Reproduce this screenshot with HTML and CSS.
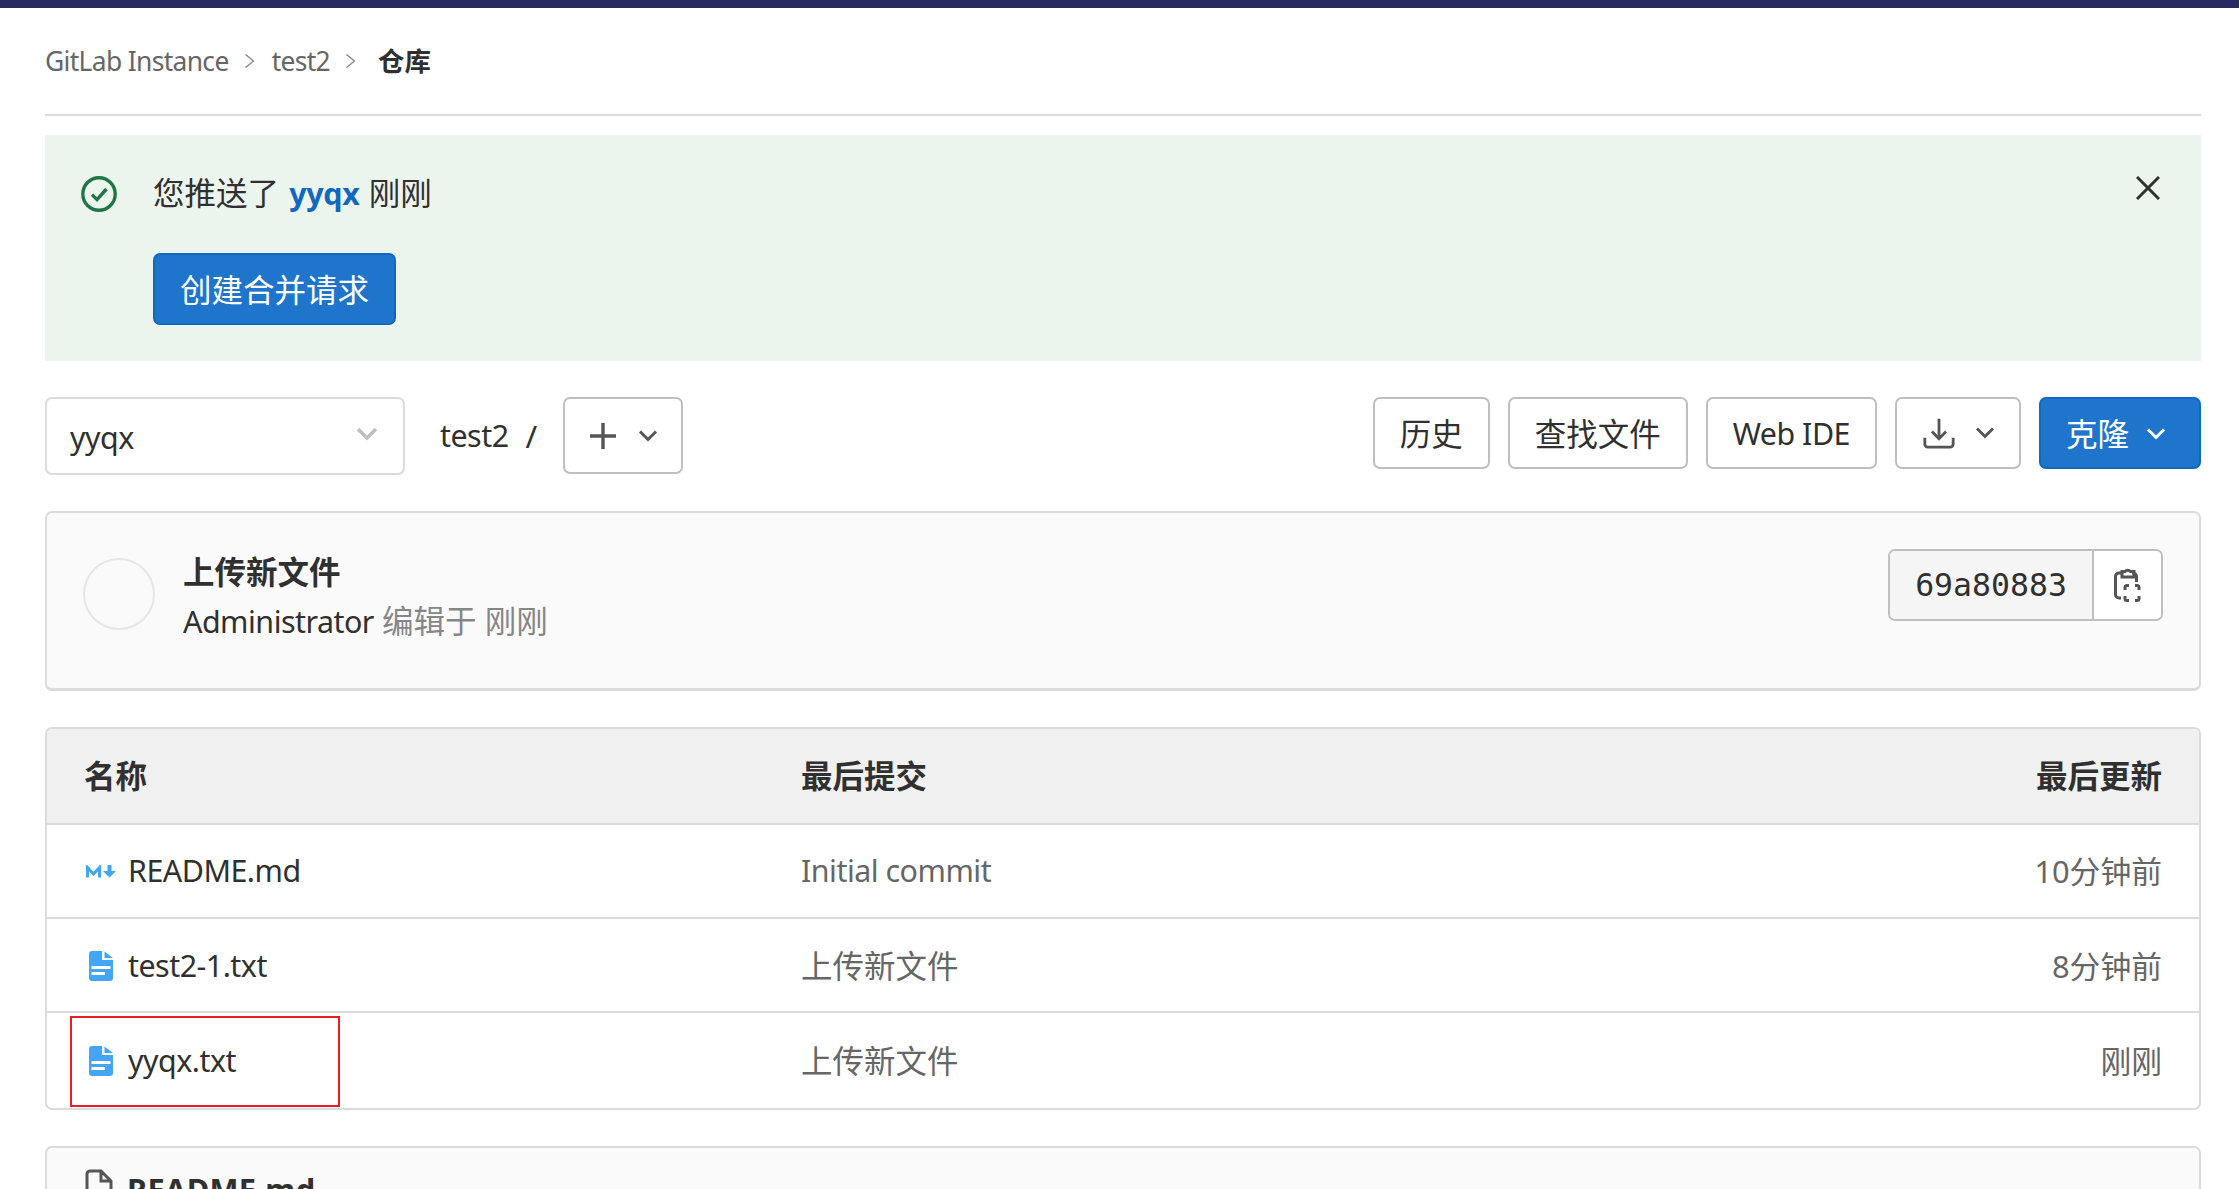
FILE: index.html
```html
<!DOCTYPE html>
<html lang="zh-CN">
<head>
<meta charset="utf-8">
<title>仓库 · test2 · GitLab</title>
<link rel="stylesheet" href="styles.css">
</head>
<body>
<div class="topbar"></div>
<main class="page">
  <nav class="crumbs">
    <a class="crumb">GitLab Instance</a>
    <svg class="crumb-sep" viewBox="0 0 16 24"><path d="M4.500 5.500l8 6.500-8 6.500"/></svg>
    <a class="crumb">test2</a>
    <svg class="crumb-sep" viewBox="0 0 16 24"><path d="M4.500 5.500l8 6.500-8 6.500"/></svg>
    <strong class="crumb-current">仓库</strong>
  </nav>

  <section class="alert">
    <svg class="alert-icon" viewBox="0 0 36 36"><circle cx="18" cy="18" r="16.2"/><path d="M11 18.6l5 5 9.500-10.600"/></svg>
    <div class="alert-body">
      <p class="alert-text">您推送了 <b class="branch">yyqx</b> 刚刚</p>
      <a class="btn btn-primary btn-mr">创建合并请求</a>
    </div>
    <svg class="alert-close" viewBox="0 0 24 24"><path d="M1 1l22 22M23 1L1 23"/></svg>
  </section>

  <div class="toolbar">
    <div class="branch-select"><span class="lat">yyqx</span>
      <svg class="chev chev-light" viewBox="0 0 20 20"><path d="M1 5l9 9 9-9"/></svg>
    </div>
    <span class="path-name lat">test2</span>
    <span class="path-slash">/</span>
    <a class="btn btn-add">
      <svg class="plus" viewBox="0 0 30 30"><path d="M15 2v26M2 15h26"/></svg>
      <svg class="chev" viewBox="0 0 20 20"><path d="M2 5.500l8 8 8-8"/></svg>
    </a>
    <div class="toolbar-right">
      <a class="btn">历史</a>
      <a class="btn">查找文件</a>
      <a class="btn lat">Web IDE</a>
      <a class="btn btn-dl">
        <svg class="dl" viewBox="0 0 36 36"><path d="M18 3v21M10.500 16.500l7.500 7.500 7.500-7.500M3 23v7a3 3 0 0 0 3 3h24a3 3 0 0 0 3-3v-7"/></svg>
        <svg class="chev" viewBox="0 0 20 20"><path d="M2 5.500l8 8 8-8"/></svg>
      </a>
      <a class="btn btn-primary btn-clone">克隆
        <svg class="chev chev-white" viewBox="0 0 20 20"><path d="M2 5.500l8 8 8-8"/></svg>
      </a>
    </div>
  </div>

  <section class="commit">
    <div class="avatar"></div>
    <div class="commit-info">
      <div class="commit-title">上传新文件</div>
      <div class="commit-meta"><span class="author lat">Administrator</span> 编辑于 刚刚</div>
    </div>
    <div class="sha-group">
      <span class="sha">69a80883</span>
      <span class="sha-copy">
        <svg class="clip" viewBox="0 0 28 36"><path d="M7 6H5a3.500 3.500 0 0 0-3.500 3.500v18A3.500 3.500 0 0 0 5 31h2M18 6h1a3.500 3.500 0 0 1 3.500 3.500V15M8 10V4.500h3a3.500 3.500 0 0 1 5.500 0H20V10z"/><path d="M11 23v-2.500a2 2 0 0 1 2-2h2M21 18.500h2a2 2 0 0 1 2 2V23M25 29v2.500a2 2 0 0 1-2 2h-2M15 33.500h-2a2 2 0 0 1-2-2V29"/></svg>
      </span>
    </div>
  </section>

  <section class="files">
    <div class="files-row files-head">
      <span>名称</span><span>最后提交</span><span class="cell-end">最后更新</span>
    </div>
    <div class="files-row">
      <span class="file-name">
        <svg class="md-icon" viewBox="0 0 30 13"><path class="md-m" d="M1.500 12.500V2.500l6 6.500 6-6.500v10"/><path class="md-a" d="M21.500 0h4v6h4.500l-6.500 6.500-6.500-6.500h4.500z"/></svg>
        <span class="lat">README.md</span></span>
      <span class="cell-muted lat">Initial commit</span>
      <span class="cell-time cell-muted">10分钟前</span>
    </div>
    <div class="files-row files-mid">
      <span class="file-name">
        <svg class="txt-icon" viewBox="0 0 24 30"><path class="txt-body" d="M3 0h10v9h11v18a3 3 0 0 1-3 3H3a3 3 0 0 1-3-3V3a3 3 0 0 1 3-3z"/><path class="txt-body" d="M15.500 0.500L24 7h-8.500z"/><path class="txt-line" d="M2.500 16.500h19M2.500 22.500h13.500"/></svg>
        <span class="lat">test2-1.txt</span></span>
      <span class="cell-muted">上传新文件</span>
      <span class="cell-time cell-muted">8分钟前</span>
    </div>
    <div class="files-row files-last">
      <span class="file-name">
        <svg class="txt-icon" viewBox="0 0 24 30"><path class="txt-body" d="M3 0h10v9h11v18a3 3 0 0 1-3 3H3a3 3 0 0 1-3-3V3a3 3 0 0 1 3-3z"/><path class="txt-body" d="M15.500 0.500L24 7h-8.500z"/><path class="txt-line" d="M2.500 16.500h19M2.500 22.500h13.500"/></svg>
        <span class="lat">yyqx.txt</span></span>
      <span class="cell-muted">上传新文件</span>
      <span class="cell-time cell-muted">刚刚</span>
      <div class="redbox"></div>
    </div>
  </section>

  <section class="readme">
    <svg class="readme-icon" viewBox="0 0 28 36"><path d="M2 5a3 3 0 0 1 3-3h11l10 10v19a3 3 0 0 1-3 3H5a3 3 0 0 1-3-3zM16 2v10h10"/></svg>
    <strong class="lat">README.md</strong>
  </section>
</main>
</body>
</html>
```
FILE: styles.css
```css
* { box-sizing: border-box; }
html, body { margin: 0; height: 1189px; overflow: hidden; background: #fff; }
body {
  font-family: "Noto Sans", "Noto Sans CJK SC", sans-serif;
  font-size: 31.5px;
  line-height: 44px;
  color: #303030;
}
svg { display: block; fill: none; flex: none; }
.lat { font-size: 30.4px; letter-spacing: -0.5px; }
.topbar { height: 8px; background: #292961; }
.page { padding: 0 38px 0 45px; }

.crumbs {
  height: 108px;
  display: flex;
  align-items: center;
  font-size: 26.4px;
  border-bottom: 2px solid #dbdbdb;
  color: #666;
}
.crumb { letter-spacing: -0.65px; }
.crumb-sep { width: 16px; height: 24px; margin: 0 15px 0 12px; }
.crumb-sep path { stroke: #888; stroke-width: 1.400; }
.crumb-current { color: #303030; font-weight: 700; margin-left: 5px; }

.alert {
  margin-top: 19px;
  height: 226px;
  background: #ecf4ee;
  display: flex;
  padding: 41px 41px 0 36px;
}
.alert-icon { width: 36px; height: 36px; }
.alert-icon circle, .alert-icon path { stroke: #217645; stroke-width: 3.400; }
.alert-body { margin-left: 36px; flex: 1; }
.alert-text { margin: 0; height: 44px; line-height: 34px; }
.branch { color: #1068bf; font-weight: 700; font-size: 30.4px; letter-spacing: -0.3px; margin: 0 1px 0 2px; }
.alert-close { width: 24px; height: 24px; }
.alert-close path { stroke: #303030; stroke-width: 3; }

.btn {
  display: inline-flex;
  align-items: center;
  justify-content: center;
  height: 72px;
  padding: 2px 25px 0;
  background: #fff;
  color: #303030;
  border-radius: 7px;
  border: 2px solid #bfbfbf;
  white-space: nowrap;
}
.btn-primary { background: #1f75cb; color: #fff; border-color: #1068bf; }
.btn-mr { margin-top: 33px; }

.toolbar {
  margin-top: 36px;
  height: 78px;
  display: flex;
  align-items: flex-start;
}
.branch-select {
  width: 360px;
  height: 78px;
  border: 2px solid #dbdbdb;
  border-radius: 7px;
  display: flex;
  align-items: center;
  justify-content: space-between;
  padding: 4px 26px 0 23px;
  background: #fff;
}
.chev { width: 20px; height: 20px; }
.chev path { stroke: #555; stroke-width: 3; }
.chev-light { margin-top: -8px; }
.chev-light path { stroke: #bfbfbf; stroke-width: 3.500; }
.chev-white path { stroke: #fff; }
.path-name { margin: 17px 0 0 35px; }
.path-slash { margin: 17px 0 0 17px; }
.btn-add { margin-left: 26px; width: 120px; height: 77px; padding: 0; gap: 20px; }
.plus { width: 30px; height: 30px; }
.plus path { stroke: #555; stroke-width: 3.400; }
.toolbar-right { margin-left: auto; display: flex; gap: 18px; }
.btn-dl { gap: 19px; padding: 0; width: 126px; }
.dl { width: 34px; height: 34px; }
.dl path { stroke: #555; stroke-width: 3; }
.btn-clone { gap: 17px; padding: 2px 0 0 25px; width: 162px; justify-content: flex-start; }

.commit {
  margin-top: 36px;
  height: 180px;
  background: #fafafa;
  border: 2px solid #dbdbdb;
  border-bottom-width: 3px;
  border-radius: 7px;
  display: flex;
  align-items: flex-start;
  padding: 45px 36px 0 36px;
}
.avatar {
  width: 72px;
  height: 72px;
  border-radius: 50%;
  border: 2px solid #e6e6e6;
  background: #fafafa;
}
.commit-info { margin-left: 28px; flex: 1; margin-top: -11px; }
.commit-title { font-weight: 700; height: 50px; line-height: 50px; }
.commit-meta { color: #868686; height: 48px; line-height: 48px; }
.author { color: #303030; }
.sha-group {
  display: flex;
  height: 72px;
  margin-top: -9px;
  border: 2px solid #bfbfbf;
  border-radius: 7px;
  overflow: hidden;
}
.sha {
  width: 204px;
  background: #f5f5f5;
  border-right: 2px solid #bfbfbf;
  font-family: "DejaVu Sans Mono", monospace;
  display: flex;
  align-items: center;
  justify-content: center;
}
.sha-copy { width: 67px; background: #fff; display: flex; align-items: center; justify-content: center; }
.clip { width: 28px; height: 36px; }
.clip path { stroke: #555; stroke-width: 3; }

.files {
  margin-top: 36px;
  border: 2px solid #dbdbdb;
  border-radius: 7px;
}
.files-row {
  position: relative;
  display: grid;
  grid-template-columns: 717px 1fr auto;
  align-items: center;
  height: 94px;
  padding: 0 37px 0 37px;
  border-top: 2px solid #dbdbdb;
}
.files-head {
  height: 94px;
  border-top: 0;
  background: #f0f0f0;
  font-weight: 700;
  border-radius: 5px 5px 0 0;
}
.files-mid { padding-top: 2px; }
.files-last { height: 97px; }
.file-name { display: flex; align-items: center; }
.cell-muted { color: #666; }
.cell-end { text-align: right; }
.cell-time { text-align: right; font-size: 30.8px; }
.md-icon { width: 30px; height: 13px; margin: 0 12px 0 2px; }
.md-m { stroke: #42a5f5; stroke-width: 3; }
.md-a { fill: #42a5f5; }
.txt-icon { width: 24px; height: 30px; margin: 0 15px 0 5px; }
.txt-body { fill: #42a5f5; }
.txt-line { stroke: #fff; stroke-width: 3; }
.redbox {
  position: absolute;
  left: 23px;
  top: 3px;
  width: 270px;
  height: 91px;
  border: 2px solid #ed1c24;
}

.readme {
  margin-top: 36px;
  height: 120px;
  background: #fafafa;
  border: 2px solid #dbdbdb;
  border-radius: 7px;
  display: flex;
  align-items: flex-start;
  padding: 21px 38px;
  gap: 14px;
}
.readme strong { font-size: 30.8px; letter-spacing: 0.3px; line-height: 40px; }
.readme-icon { width: 28px; height: 36px; }
.readme-icon path { stroke: #555; stroke-width: 3; }
```
